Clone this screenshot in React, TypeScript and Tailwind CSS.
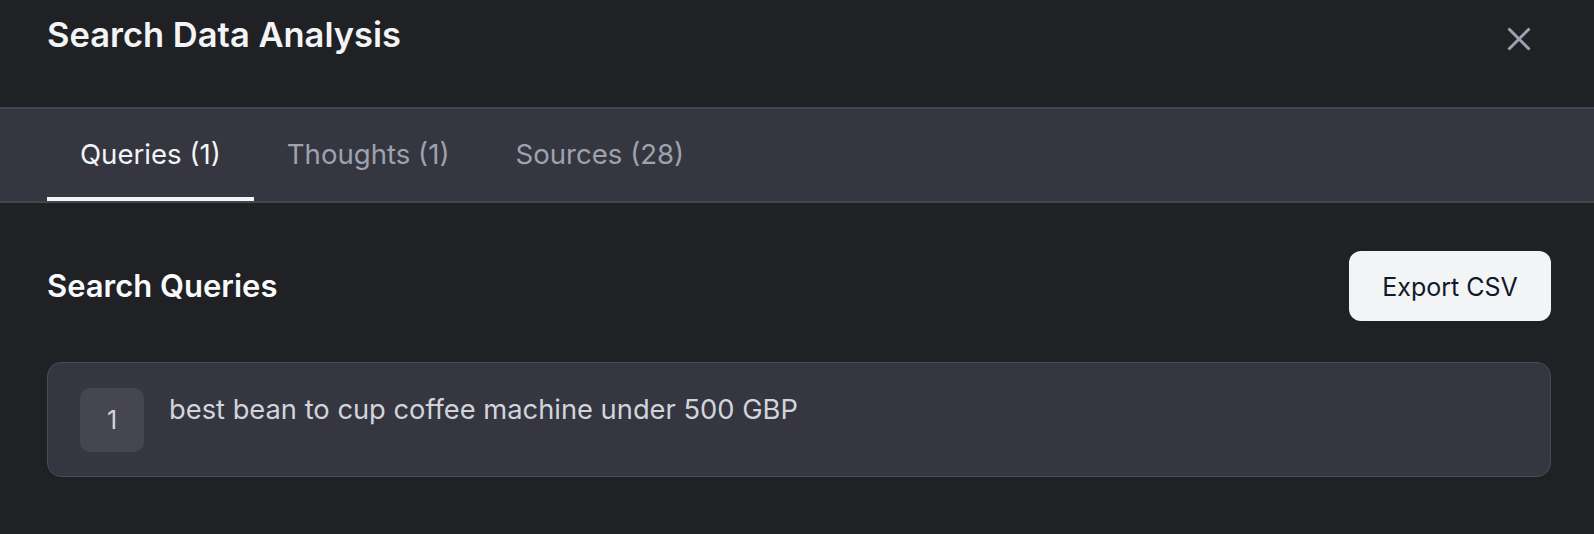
import { useState } from "react";

const tabs = [
  { id: "queries", label: "Queries (1)" },
  { id: "thoughts", label: "Thoughts (1)" },
  { id: "sources", label: "Sources (28)" },
];

const queries = ["best bean to cup coffee machine under 500 GBP"];

export default function App() {
  const [active, setActive] = useState("queries");
  return (
    <div className="min-h-screen bg-[#202124] font-['Inter','Noto_Sans',sans-serif]">
      {/* header */}
      <div className="flex h-[107px] items-start justify-between pl-[47px] pr-[63px] pt-[14px]">
        <h2 className="text-[34.5px] font-semibold leading-[42px] text-[#f3f4f6]">
          Search Data Analysis
        </h2>
        <button className="mt-[13px] text-[#9ca3af]">
          <svg width="24" height="24" viewBox="0 0 24 24" fill="none">
            <path
              d="M1.5 1.5l21 21M22.5 1.5l-21 21"
              stroke="currentColor"
              strokeWidth="3"
            />
          </svg>
        </button>
      </div>

      {/* tabs */}
      <div className="flex h-[96px] border-y-2 border-[#45454f] bg-[#363641] px-[47px]">
        {tabs.map((t) => (
          <button
            key={t.id}
            onClick={() => setActive(t.id)}
            className={
              active === t.id
                ? "flex items-center border-b-4 border-[#f3f4f6] px-[33px] pt-[4px] text-[27.6px] text-[#f3f4f6]"
                : "flex items-center border-b-4 border-transparent px-[33px] pt-[4px] text-[27.6px] text-[#9ca3af]"
            }
          >
            {t.label}
          </button>
        ))}
      </div>

      {/* content */}
      <div className="px-[43px] pt-[48px]">
        <div className="flex items-center justify-between pl-[4px]">
          <h3 className="text-[31px] font-semibold leading-[36px] text-[#f9fafb]">
            Search Queries
          </h3>
          <button className="flex h-[70px] w-[202px] items-center justify-center rounded-[12px] bg-[#f3f4f6] pt-[3px] text-[25px] text-[#111827]">
            Export CSV
          </button>
        </div>

        <div className="mt-[41px] ml-[4px] flex flex-col gap-4">
          {queries.map((q, i) => (
            <div
              key={i}
              className="flex h-[115px] items-start gap-[25px] rounded-[14px] border-[1.5px] border-[#4a4a58] bg-[#363641] pl-[32px] pt-[25px]"
            >
              <div className="flex h-[64px] w-[64px] shrink-0 items-center justify-center rounded-[10px] bg-[#45464f] pt-[2px] text-[25px] text-[#d1d5db]">
                {i + 1}
              </div>
              <p className="pt-[2px] text-[27.3px] leading-[40px] text-[#d1d5db]">{q}</p>
            </div>
          ))}
        </div>
      </div>
    </div>
  );
}
